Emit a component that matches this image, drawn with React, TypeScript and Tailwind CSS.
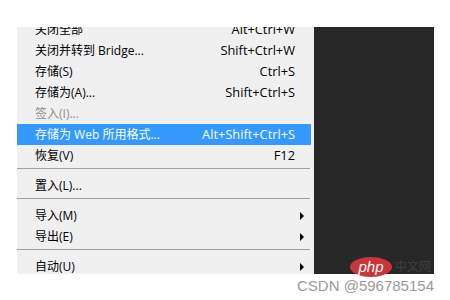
import React from 'react';

type Item =
  | { kind: 'row'; label: string; shortcut?: string; sub?: boolean; disabled?: boolean; active?: boolean }
  | { kind: 'sep' };

const items: Item[] = [
  { kind: 'row', label: '关闭全部', shortcut: 'Alt+Ctrl+W' },
  { kind: 'row', label: '关闭并转到 Bridge...', shortcut: 'Shift+Ctrl+W' },
  { kind: 'row', label: '存储(S)', shortcut: 'Ctrl+S' },
  { kind: 'row', label: '存储为(A)...', shortcut: 'Shift+Ctrl+S' },
  { kind: 'row', label: '签入(I)...', disabled: true },
  { kind: 'row', label: '存储为 Web 所用格式...', shortcut: 'Alt+Shift+Ctrl+S', active: true },
  { kind: 'row', label: '恢复(V)', shortcut: 'F12' },
  { kind: 'sep' },
  { kind: 'row', label: '置入(L)...' },
  { kind: 'sep' },
  { kind: 'row', label: '导入(M)', sub: true },
  { kind: 'row', label: '导出(E)', sub: true },
  { kind: 'sep' },
  { kind: 'row', label: '自动(U)', sub: true },
];

const MenuRow: React.FC<{ item: Extract<Item, { kind: 'row' }> }> = ({ item }) => {
  const color = item.active ? 'text-white' : item.disabled ? 'text-[#8d8d8d]' : 'text-black';
  return (
    <div
      className={`h-[21px] mr-[3px] flex items-center justify-between pl-[18px] ${
        item.sub ? 'pr-[7px]' : 'pr-[16px]'
      } ${item.active ? 'bg-[#3399ff]' : ''} ${color}`}
    >
      <span>{item.label}</span>
      {item.shortcut && <span className="text-[12.8px]">{item.shortcut}</span>}
      {item.sub && (
        <span className="w-0 h-0 border-y-[4px] border-y-transparent border-l-[4px] border-l-black" />
      )}
    </div>
  );
};

const App: React.FC = () => {
  return (
    <div
      className="relative w-[450px] h-[300px] bg-white overflow-hidden"
      style={{ fontFamily: '"Open Sans", "Noto Sans CJK SC", sans-serif' }}
    >
      <div className="flex pt-[27px] pl-[17px]">
        {/* File menu */}
        <div className="w-[297px] h-[247px] bg-[#f0f0f0] overflow-hidden text-[12px] leading-none">
          <div className="mt-[-8px]">
            {items.map((item, i) =>
              item.kind === 'sep' ? (
                <div key={i} className="h-[9px] pt-[2px] mr-[4px]">
                  <div className="h-px bg-[#a0a0a0]" />
                </div>
              ) : (
                <MenuRow key={i} item={item} />
              )
            )}
          </div>
        </div>
        {/* Canvas area */}
        <div className="w-[120px] h-[247px] bg-[#282828]" />
      </div>

      {/* Watermark */}
      <div className="absolute left-[350px] top-[257px] flex items-center gap-[3px]">
        <div className="w-[42px] h-[20px] rounded-[50%] bg-[#c9363a] flex items-center justify-center">
          <span
            className="text-white italic text-[15px] leading-none -mt-[2px]"
            style={{ fontFamily: '"Liberation Sans", sans-serif' }}
          >
            php
          </span>
        </div>
        <span className="text-[12px] leading-none text-[#3e3e3e]">中文网</span>
      </div>

      <div className="flex justify-end pr-[16px] mt-[4px]">
        <span
          className="text-[15px] leading-none text-[#9a9a9a]"
          style={{ fontFamily: '"Liberation Sans", sans-serif' }}
        >
          CSDN @596785154
        </span>
      </div>
    </div>
  );
};

export default App;
